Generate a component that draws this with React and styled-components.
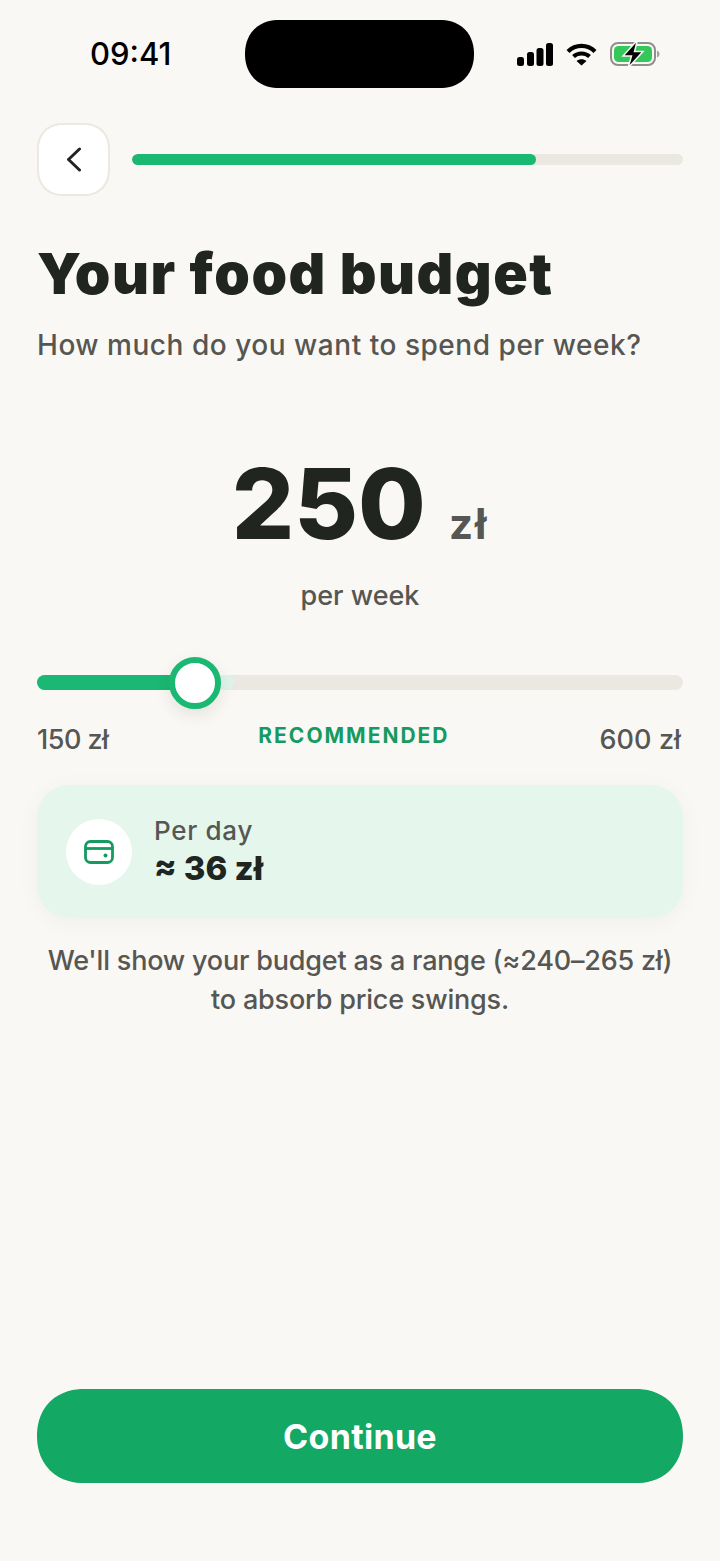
import styled, { createGlobalStyle } from "styled-components";

const GlobalStyle = createGlobalStyle`
  html, body {
    margin: 0;
    padding: 0;
    background: #faf8f4;
  }
  * {
    box-sizing: border-box;
  }
`;

const Screen = styled.div`
  width: 720px;
  height: 1561px;
  display: flex;
  flex-direction: column;
  padding: 20px 37px 78px;
  background: #faf8f4;
  font-family: "Inter", "Liberation Sans", sans-serif;
  color: #20261f;
  overflow: hidden;
`;

const StatusBar = styled.div`
  height: 68px;
  display: flex;
  align-items: center;
  justify-content: space-between;
`;

const Time = styled.div`
  width: 208px;
  padding: 0 0 2px 53px;
  font-size: 31px;
  font-weight: 500;
  color: #000;
`;

const Island = styled.div`
  width: 229px;
  height: 68px;
  border-radius: 34px;
  corner-shape: superellipse(1.12);
  background: #000;
`;

const StatusIcons = styled.div`
  width: 209px;
  display: flex;
  align-items: center;
  justify-content: flex-end;
  gap: 13px;
  padding-right: 23px;
`;

const TopRow = styled.div`
  display: flex;
  align-items: center;
  gap: 22px;
  margin-top: 35px;
`;

const BackButton = styled.button`
  width: 73px;
  height: 73px;
  padding: 0;
  display: flex;
  align-items: center;
  justify-content: center;
  background: #fff;
  border: 2px solid #ece8e2;
  border-radius: 26px;
  corner-shape: superellipse(1.12);
`;

const Progress = styled.div`
  flex: 1;
  height: 11px;
  border-radius: 6px;
  background: #ebe8e2;
  overflow: hidden;
`;

const ProgressFill = styled.div`
  height: 100%;
  border-radius: 6px;
  background: #1ab872;
`;

const Title = styled.h1`
  margin: 42px 0 0;
  font-size: 57px;
  line-height: 72px;
  font-weight: 900;
  letter-spacing: 1.5px;
`;

const Subtitle = styled.p`
  margin: 17px 0 0;
  font-size: 28px;
  line-height: 36px;
  font-weight: 500;
  letter-spacing: 0.53px;
  color: #565652;
`;

const Amount = styled.div`
  margin-top: 81px;
  display: flex;
  align-items: baseline;
  justify-content: center;
  gap: 23px;
`;

const AmountValue = styled.span`
  font-size: 98px;
  line-height: 120px;
  font-weight: 800;
`;

const AmountUnit = styled.span`
  font-size: 42px;
  font-weight: 700;
  letter-spacing: 2px;
  color: #565652;
`;

const PerWeek = styled.div`
  margin-top: 14px;
  text-align: center;
  font-size: 27px;
  line-height: 36px;
  font-weight: 500;
  color: #565652;
`;

const SliderTrack = styled.div`
  position: relative;
  margin-top: 61px;
  height: 15px;
  border-radius: 8px;
  background: #ebe8e2;
`;

const SliderHalo = styled.div`
  height: 100%;
  border-radius: 8px;
  background: #dff3ea;
`;

const SliderFill = styled.div`
  position: absolute;
  left: 0;
  top: 0;
  height: 100%;
  border-radius: 8px;
  background: #1ab872;
`;

const Thumb = styled.div`
  position: absolute;
  top: 50%;
  width: 52px;
  height: 52px;
  transform: translate(-50%, -50%);
  border: 6px solid #1ab872;
  border-radius: 50%;
  background: #fff;
  box-shadow: 0 6px 16px rgba(32, 38, 31, 0.1);
`;

const RangeLabels = styled.div`
  margin-top: 31px;
  display: flex;
  align-items: flex-start;
  justify-content: space-between;
`;

const RangeEnd = styled.span`
  padding: 1px ${(props) => (props.$end ? "2px" : "0")} 0 0;
  font-size: 27px;
  line-height: 36px;
  font-weight: 500;
  letter-spacing: ${(props) => (props.$end ? "0.1px" : "-0.5px")};
  color: #565652;
`;

const Recommended = styled.span`
  font-size: 21px;
  line-height: 30px;
  font-weight: 700;
  letter-spacing: 2px;
  color: #159a5f;
`;

const InfoCard = styled.div`
  margin-top: 27px;
  height: 133px;
  display: flex;
  align-items: center;
  gap: 22px;
  padding: 0 29px;
  border-radius: 32px;
  background: #e5f6ed;
  box-shadow: 0 4px 24px rgba(32, 38, 31, 0.04);
`;

const IconCircle = styled.div`
  width: 66px;
  height: 66px;
  display: flex;
  align-items: center;
  justify-content: center;
  border-radius: 50%;
  background: #fff;
`;

const InfoText = styled.div`
  display: flex;
  flex-direction: column;
  padding-bottom: 2px;
`;

const InfoLabel = styled.span`
  font-size: 26px;
  line-height: 34px;
  font-weight: 500;
  letter-spacing: 0.7px;
  color: #565652;
`;

const InfoValue = styled.span`
  font-size: 33px;
  line-height: 40px;
  font-weight: 800;
`;

const Note = styled.p`
  margin: 23px 0 0;
  text-align: center;
  font-size: 27px;
  line-height: 39px;
  font-weight: 500;
  letter-spacing: -0.2px;
  color: #565652;
`;

const ContinueButton = styled.button`
  margin-top: auto;
  height: 94px;
  border: none;
  border-radius: 47px;
  corner-shape: superellipse(1.12);
  background: #13a863;
  color: #fff;
  font-family: inherit;
  font-size: 34px;
  font-weight: 700;
  letter-spacing: 0.3px;
`;

function SignalIcon() {
  return (
    <svg width="36" height="23" viewBox="0 0 36 23" fill="#000">
      <rect x="0" y="14" width="7" height="9" rx="2.5" />
      <rect x="10" y="9" width="7" height="14" rx="2.5" />
      <rect x="19.500" y="5" width="7" height="18" rx="2.500" />
      <rect x="29" y="0" width="7" height="23" rx="2.5" />
    </svg>
  );
}

function WifiIcon() {
  return (
    <svg width="31" height="23" viewBox="0 0 31 23" fill="none" stroke="#000" strokeWidth="4.2">
      <path d="M2 8.500C9.500 1 21.500 1 29 8.500" />
      <path d="M7.500 13.500C12 9.500 19 9.500 23.500 13.500" />
      <path d="M15.500 22.500L10.500 18C13.500 15.800 17.500 15.800 20.500 18Z" fill="#000" stroke="none" />
    </svg>
  );
}

function BatteryIcon() {
  return (
    <svg width="50" height="28" viewBox="0 0 50 28">
      <rect x="1" y="3" width="44" height="22" rx="7" fill="none" stroke="#8f8f8b" strokeWidth="2" />
      <rect x="4" y="6" width="38" height="16" rx="4.500" fill="#34c759" />
      <path d="M47 10.500C49 11.500 49.500 12.500 49.500 14C49.500 15.500 49 16.500 47 17.500Z" fill="#a3a3a0" />
      <path d="M27.500 0L13 16H21.500L18 28L33 11.500H24.500Z" fill="#000" stroke="#faf8f4" strokeWidth="1.500" />
    </svg>
  );
}

function ChevronIcon() {
  return (
    <svg width="16" height="25" viewBox="0 0 16 25" fill="none" stroke="#20261f" strokeWidth="3" strokeLinecap="round" strokeLinejoin="round">
      <path d="M13.500 2L2.500 12.500L13.500 23" />
    </svg>
  );
}

function WalletIcon() {
  return (
    <svg width="30" height="24" viewBox="0 0 30 24" fill="none" stroke="#159a5f" strokeWidth="2.800">
      <rect x="1.500" y="1.500" width="27" height="21" rx="5" />
      <path d="M1.500 8.500H28.500" />
      <circle cx="21.500" cy="15.500" r="2" fill="#159a5f" stroke="none" />
    </svg>
  );
}

export default function App() {
  return (
    <Screen>
      <GlobalStyle />
      <StatusBar>
        <Time>09:41</Time>
        <Island />
        <StatusIcons>
          <SignalIcon />
          <WifiIcon />
          <BatteryIcon />
        </StatusIcons>
      </StatusBar>
      <TopRow>
        <BackButton>
          <ChevronIcon />
        </BackButton>
        <Progress>
          <ProgressFill style={{ width: "73.3%" }} />
        </Progress>
      </TopRow>
      <Title>Your food budget</Title>
      <Subtitle>How much do you want to spend per week?</Subtitle>
      <Amount>
        <AmountValue>250</AmountValue>
        <AmountUnit>zł</AmountUnit>
      </Amount>
      <PerWeek>per week</PerWeek>
      <SliderTrack>
        <SliderHalo style={{ width: "30.5%" }} />
        <SliderFill style={{ width: "24.5%" }} />
        <Thumb style={{ left: "24.5%" }} />
      </SliderTrack>
      <RangeLabels>
        <RangeEnd>150 zł</RangeEnd>
        <Recommended>RECOMMENDED</Recommended>
        <RangeEnd $end>600 zł</RangeEnd>
      </RangeLabels>
      <InfoCard>
        <IconCircle>
          <WalletIcon />
        </IconCircle>
        <InfoText>
          <InfoLabel>Per day</InfoLabel>
          <InfoValue>≈ 36 zł</InfoValue>
        </InfoText>
      </InfoCard>
      <Note>
        We'll show your budget as a range (≈240–265 zł)
        <br />
        to absorb price swings.
      </Note>
      <ContinueButton>Continue</ContinueButton>
    </Screen>
  );
}
